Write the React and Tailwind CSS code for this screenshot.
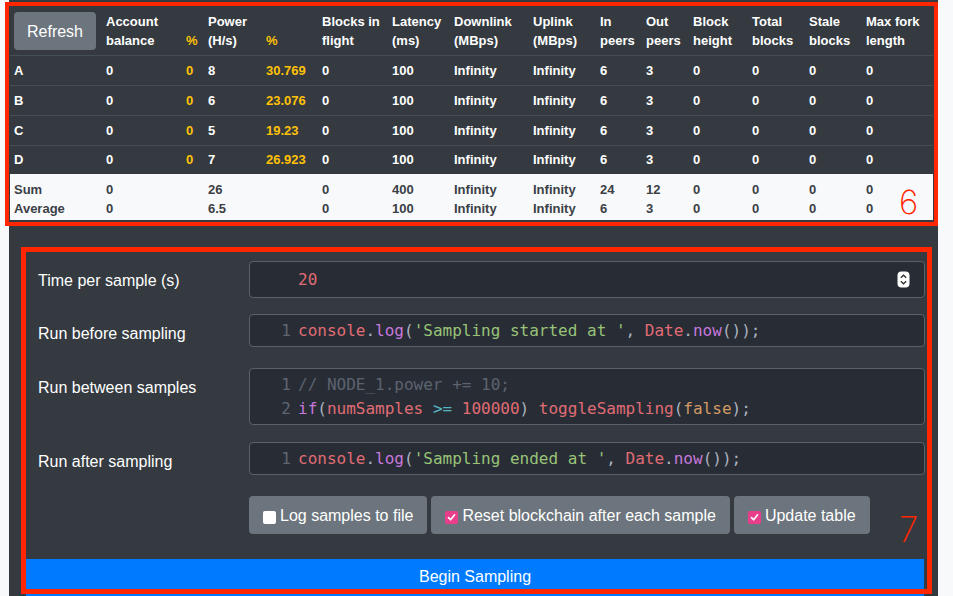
import React from "react";

const cols =
  "grid grid-cols-[92px_80px_22px_58px_56px_70px_62px_79px_67px_46px_47px_59px_57px_57px_71px]";

const headers = [
  "",
  ["Account", "balance"],
  ["", "%"],
  ["Power", "(H/s)"],
  ["", "%"],
  ["Blocks in", "flight"],
  ["Latency", "(ms)"],
  ["Downlink", "(MBps)"],
  ["Uplink", "(MBps)"],
  ["In", "peers"],
  ["Out", "peers"],
  ["Block", "height"],
  ["Total", "blocks"],
  ["Stale", "blocks"],
  ["Max fork", "length"],
];

const nodes = [
  ["A", "0", "0", "8", "30.769", "0", "100", "Infinity", "Infinity", "6", "3", "0", "0", "0", "0"],
  ["B", "0", "0", "6", "23.076", "0", "100", "Infinity", "Infinity", "6", "3", "0", "0", "0", "0"],
  ["C", "0", "0", "5", "19.23", "0", "100", "Infinity", "Infinity", "6", "3", "0", "0", "0", "0"],
  ["D", "0", "0", "7", "26.923", "0", "100", "Infinity", "Infinity", "6", "3", "0", "0", "0", "0"],
];

const sum = ["Sum", "0", "", "26", "", "0", "400", "Infinity", "Infinity", "24", "12", "0", "0", "0", "0"];
const avg = ["Average", "0", "", "6.5", "", "0", "100", "Infinity", "Infinity", "6", "3", "0", "0", "0", "0"];

const isPct = (i) => i === 2 || i === 4;

const C = {
  red: "text-[#e06c75]",
  purple: "text-[#c678dd]",
  green: "text-[#98c379]",
  plain: "text-[#abb2bf]",
  cyan: "text-[#56b6c2]",
  orange: "text-[#d19a66]",
  comment: "text-[#5c6370]",
};

const CodeLine = ({ n, children }) => (
  <div className="flex h-6 leading-6">
    <span className="w-[44px] shrink-0 pr-[3px] text-right text-[#5f6672]">{n}</span>
    <span className="pl-[4px] whitespace-pre">{children}</span>
  </div>
);

const Editor = ({ children }) => (
  <div className="flex-1 rounded-[4px] border border-[#5a6169] bg-[#282c34] pt-[4px] pb-[3px] font-['DejaVu_Sans_Mono',monospace] text-[16px]">
    {children}
  </div>
);

const FormRow = ({ label, className = "", children }) => (
  <div className={`flex items-start ${className}`}>
    <div className="w-[223px] shrink-0 pl-[12px] pt-[8px] leading-6 text-[16px] text-white">
      {label}
    </div>
    {children}
  </div>
);

const Check = ({ checked }) =>
  checked ? (
    <span className="mr-[4px] mt-[2px] inline-flex h-[13px] w-[13px] items-center justify-center rounded-[2px] bg-[#e83e8c]">
      <svg width="9" height="9" viewBox="0 0 9 9">
        <path d="M1.5 4.6 L3.6 6.8 L7.6 1.8" stroke="white" strokeWidth="1.6" fill="none" strokeLinecap="round" strokeLinejoin="round" />
      </svg>
    </span>
  ) : (
    <span className="mr-[4px] mt-[2px] inline-block h-[13px] w-[13px] rounded-[2px] bg-white" />
  );

const ToggleButton = ({ checked, children }) => (
  <button className="inline-flex h-[38px] items-center rounded-[4px] bg-[#6c757d] px-[14px] pt-[2px] text-[16px] text-white">
    <Check checked={checked} />
    {children}
  </button>
);

const App = () => {
  return (
    <div className="relative h-[596px] w-[953px] overflow-hidden bg-[#f8f9fa] font-['Liberation_Sans',Arial,sans-serif]">
      <div className="ml-[9px] h-full w-[929px] bg-[#343a40] pt-[6px]">
        {/* Node table */}
        <div className="ml-[1px] w-[923px] text-[13px] font-bold">
          <div className={`${cols} h-[50px] items-end border-b border-[#454d55] pb-[5px] leading-[19px] text-white`}>
            {headers.map((h, i) =>
              i === 0 ? (
                <div key={i} className="self-end pl-[4px]">
                  <button className="h-[38px] w-[82px] rounded-[4px] bg-[#6c757d] text-[16px] font-normal text-white">
                    Refresh
                  </button>
                </div>
              ) : (
                <div key={i} className={`pl-[4px] ${isPct(i) ? "text-[#ffc107]" : ""}`}>
                  <div>{h[0] || "\u00a0"}</div>
                  <div>{h[1]}</div>
                </div>
              )
            )}
          </div>
          {nodes.map((r, ri) => (
            <div
              key={r[0]}
              className={`${cols} items-center text-white ${ri < nodes.length - 1 ? "h-[30px] border-b border-[#454d55]" : "h-[28px]"}`}
            >
              {r.map((v, i) => (
                <div key={i} className={`pl-[4px] ${isPct(i) ? "text-[#ffc107]" : ""}`}>
                  {v}
                </div>
              ))}
            </div>
          ))}
          <div className="bg-[#f8f9fa] pt-[6px] pb-[2px] leading-[19px] text-[#3b4046]">
            {[sum, avg].map((r) => (
              <div key={r[0]} className={cols}>
                {r.map((v, i) => (
                  <div key={i} className="pl-[4px]">
                    {v}
                  </div>
                ))}
              </div>
            ))}
          </div>
        </div>

        {/* Sampling form */}
        <div className="ml-[17px] mt-[41px] w-[899px]">
          <FormRow label="Time per sample (s)">
            <div className="flex h-[37px] flex-1 items-center justify-between rounded-[4px] border border-[#5a6169] bg-[#282c34] pl-[48px] pr-[14px]">
              <span className="pt-[1px] font-['DejaVu_Sans_Mono',monospace] text-[16px] text-[#e06c75]">20</span>
              <svg width="13" height="17" viewBox="0 0 13 17">
                <rect x="0.5" y="0.5" width="12" height="16" rx="4" fill="white" />
                <path d="M3.8 6.8 L6.5 4.2 L9.2 6.8" stroke="#2b2b2b" strokeWidth="1.2" fill="none" />
                <path d="M3.8 10.2 L6.5 12.8 L9.2 10.2" stroke="#2b2b2b" strokeWidth="1.2" fill="none" />
              </svg>
            </div>
          </FormRow>

          <FormRow label="Run before sampling" className="mt-[16px]">
            <Editor>
              <CodeLine n="1">
                <span className={C.red}>console</span>
                <span className={C.plain}>.</span>
                <span className={C.purple}>log</span>
                <span className={C.plain}>(</span>
                <span className={C.green}>'Sampling started at '</span>
                <span className={C.plain}>, </span>
                <span className={C.red}>Date</span>
                <span className={C.plain}>.</span>
                <span className={C.purple}>now</span>
                <span className={C.plain}>());</span>
              </CodeLine>
            </Editor>
          </FormRow>

          <FormRow label="Run between samples" className="mt-[21px]">
            <Editor>
              <CodeLine n="1">
                <span className={C.comment}>// NODE_1.power += 10;</span>
              </CodeLine>
              <CodeLine n="2">
                <span className={C.purple}>if</span>
                <span className={C.plain}>(</span>
                <span className={C.red}>numSamples</span>
                <span className={C.plain}> </span>
                <span className={C.cyan}>&gt;=</span>
                <span className={C.plain}> </span>
                <span className={C.red}>100000</span>
                <span className={C.plain}>) </span>
                <span className={C.red}>toggleSampling</span>
                <span className={C.plain}>(</span>
                <span className={C.orange}>false</span>
                <span className={C.plain}>);</span>
              </CodeLine>
            </Editor>
          </FormRow>

          <FormRow label="Run after sampling" className="mt-[17px]">
            <Editor>
              <CodeLine n="1">
                <span className={C.red}>console</span>
                <span className={C.plain}>.</span>
                <span className={C.purple}>log</span>
                <span className={C.plain}>(</span>
                <span className={C.green}>'Sampling ended at '</span>
                <span className={C.plain}>, </span>
                <span className={C.red}>Date</span>
                <span className={C.plain}>.</span>
                <span className={C.purple}>now</span>
                <span className={C.plain}>());</span>
              </CodeLine>
            </Editor>
          </FormRow>

          <div className="mt-[21px] flex gap-[4px] pl-[223px]">
            <ToggleButton checked={false}>Log samples to file</ToggleButton>
            <ToggleButton checked>Reset blockchain after each sample</ToggleButton>
            <ToggleButton checked>Update table</ToggleButton>
          </div>

          <div className="mt-[25px] h-[37px] w-[898px] bg-[#007bff] pt-[6px] text-center text-[16px] leading-6 text-white">
            Begin Sampling
          </div>
        </div>
      </div>

      {/* Annotation overlays */}
      <div className="pointer-events-none absolute left-[5px] top-[2px] h-[224px] w-[933px] border-4 border-[#ff2600]" />
      <div className="pointer-events-none absolute left-[21px] top-[247px] h-[347px] w-[911px] border-[5px] border-[#ff2600]" />
      <div className="pointer-events-none absolute left-[899px] top-[186px] font-['Inter',sans-serif] text-[33px] font-extralight leading-none text-[#ff2600]">
        6
      </div>
      <div className="pointer-events-none absolute left-[899px] top-[512px] font-['Inter',sans-serif] text-[35px] font-extralight leading-none text-[#ff2600]">
        7
      </div>
    </div>
  );
};

export default App;
